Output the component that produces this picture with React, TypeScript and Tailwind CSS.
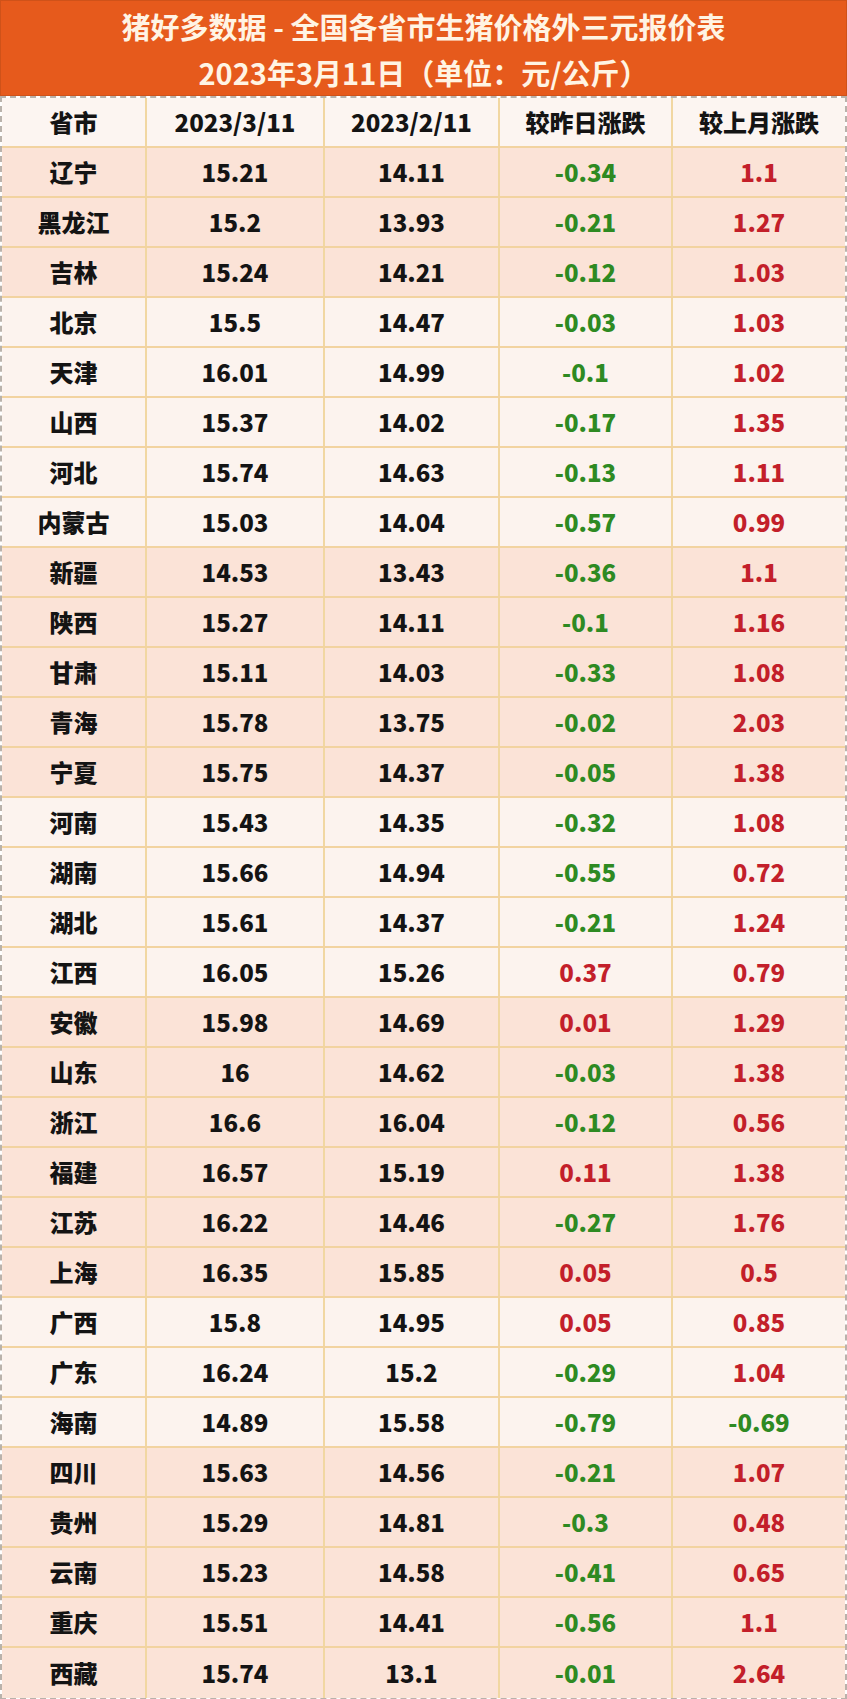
import React from "react";

type Row = { name: string; cur: string; prev: string; day: string; month: string; light?: boolean };

const rows: Row[] = [
  { name: "辽宁", cur: "15.21", prev: "14.11", day: "-0.34", month: "1.1" },
  { name: "黑龙江", cur: "15.2", prev: "13.93", day: "-0.21", month: "1.27" },
  { name: "吉林", cur: "15.24", prev: "14.21", day: "-0.12", month: "1.03" },
  { name: "北京", cur: "15.5", prev: "14.47", day: "-0.03", month: "1.03", light: true },
  { name: "天津", cur: "16.01", prev: "14.99", day: "-0.1", month: "1.02", light: true },
  { name: "山西", cur: "15.37", prev: "14.02", day: "-0.17", month: "1.35", light: true },
  { name: "河北", cur: "15.74", prev: "14.63", day: "-0.13", month: "1.11", light: true },
  { name: "内蒙古", cur: "15.03", prev: "14.04", day: "-0.57", month: "0.99", light: true },
  { name: "新疆", cur: "14.53", prev: "13.43", day: "-0.36", month: "1.1" },
  { name: "陕西", cur: "15.27", prev: "14.11", day: "-0.1", month: "1.16" },
  { name: "甘肃", cur: "15.11", prev: "14.03", day: "-0.33", month: "1.08" },
  { name: "青海", cur: "15.78", prev: "13.75", day: "-0.02", month: "2.03" },
  { name: "宁夏", cur: "15.75", prev: "14.37", day: "-0.05", month: "1.38" },
  { name: "河南", cur: "15.43", prev: "14.35", day: "-0.32", month: "1.08", light: true },
  { name: "湖南", cur: "15.66", prev: "14.94", day: "-0.55", month: "0.72", light: true },
  { name: "湖北", cur: "15.61", prev: "14.37", day: "-0.21", month: "1.24", light: true },
  { name: "江西", cur: "16.05", prev: "15.26", day: "0.37", month: "0.79", light: true },
  { name: "安徽", cur: "15.98", prev: "14.69", day: "0.01", month: "1.29" },
  { name: "山东", cur: "16", prev: "14.62", day: "-0.03", month: "1.38" },
  { name: "浙江", cur: "16.6", prev: "16.04", day: "-0.12", month: "0.56" },
  { name: "福建", cur: "16.57", prev: "15.19", day: "0.11", month: "1.38" },
  { name: "江苏", cur: "16.22", prev: "14.46", day: "-0.27", month: "1.76" },
  { name: "上海", cur: "16.35", prev: "15.85", day: "0.05", month: "0.5" },
  { name: "广西", cur: "15.8", prev: "14.95", day: "0.05", month: "0.85", light: true },
  { name: "广东", cur: "16.24", prev: "15.2", day: "-0.29", month: "1.04", light: true },
  { name: "海南", cur: "14.89", prev: "15.58", day: "-0.79", month: "-0.69", light: true },
  { name: "四川", cur: "15.63", prev: "14.56", day: "-0.21", month: "1.07" },
  { name: "贵州", cur: "15.29", prev: "14.81", day: "-0.3", month: "0.48" },
  { name: "云南", cur: "15.23", prev: "14.58", day: "-0.41", month: "0.65" },
  { name: "重庆", cur: "15.51", prev: "14.41", day: "-0.56", month: "1.1" },
  { name: "西藏", cur: "15.74", prev: "13.1", day: "-0.01", month: "2.64" },
];

const font = { fontFamily: '"Noto Sans CJK SC", "Noto Sans", sans-serif' };

const tone = (v: string) => (v.startsWith("-") ? "text-[#2e8a22]" : "text-[#c31f2a]");

const cell = "flex items-center justify-center border-r-2 border-[#f1d7a2]";

export default function App() {
  return (
    <div className="w-[847px] bg-white font-bold" style={font}>
      {/* Title band */}
      <div className="h-[96px] bg-[#e65a1c] border border-[#cf5219] flex flex-col items-center pt-[2px] text-[29px] text-[#fff4e4]">
        <div className="leading-[46px]">猪好多数据 - 全国各省市生猪价格外三元报价表</div>
        <div className="leading-[46px]">2023年3月11日（单位：元/公斤）</div>
      </div>

      <div className="border-2 border-dashed border-[#b9b2ab] text-[24px] font-black text-[#141414]">
        <div className="grid grid-cols-[145px_178px_175px_173px_1fr] h-[50px] bg-[#fcf5f1] border-b-2 border-[#f2d3a0]">
          <div className={cell}>省市</div>
          <div className={cell}>2023/3/11</div>
          <div className={cell}>2023/2/11</div>
          <div className={cell}>较昨日涨跌</div>
          <div className="flex items-center justify-center">较上月涨跌</div>
        </div>
        {rows.map((r, i) => (
          <div
            key={r.name}
            className={`grid grid-cols-[145px_178px_175px_173px_1fr] h-[50px] ${r.light ? "bg-[#fcf3ee]" : "bg-[#fbe3d7]"} ${
              i === rows.length - 1 ? "" : "border-b-2 border-[#f2d3a0]"
            }`}
          >
            <div className={cell}>{r.name}</div>
            <div className={cell}>{r.cur}</div>
            <div className={cell}>{r.prev}</div>
            <div className={`${cell} ${tone(r.day)}`}>{r.day}</div>
            <div className={`flex items-center justify-center ${tone(r.month)}`}>{r.month}</div>
          </div>
        ))}
      </div>
    </div>
  );
}
